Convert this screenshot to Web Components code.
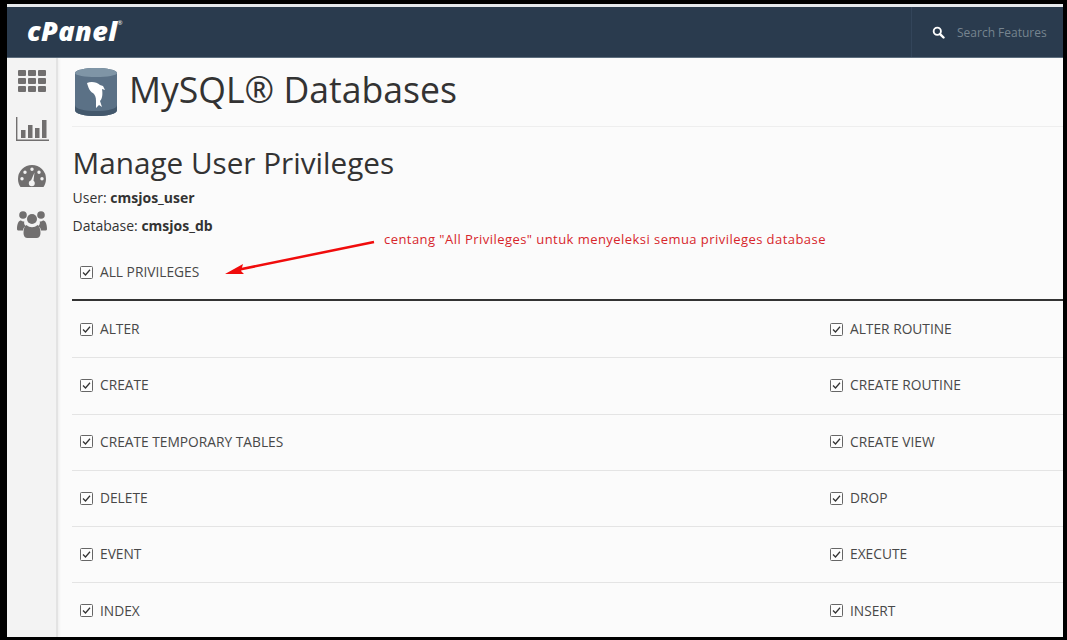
<!DOCTYPE html>
<html><head><meta charset="utf-8"><style>
html,body{margin:0;padding:0;background:#000}
body{font-family:"Open Sans",sans-serif}
</style></head><body>
<cp-app>
  <cp-header slot="header"></cp-header>
  <cp-sidebar slot="side"></cp-sidebar>
  <cp-title heading="MySQL® Databases"></cp-title>
  <cp-context user="cmsjos_user" db="cmsjos_db"></cp-context>
  <cp-privs></cp-privs>
</cp-app>
<script>
function def(name,html){customElements.define(name,class extends HTMLElement{
  connectedCallback(){if(this.shadowRoot)return;const r=this.attachShadow({mode:'open'});r.innerHTML=typeof html==='function'?html(this):html;}
});}
def('cp-app',`<style>
:host{display:block;width:1067px;height:640px;box-sizing:border-box;background:#000;padding:4px 4px 3px 7px;overflow:hidden}
.in{height:100%;display:flex;flex-direction:column;background:#fbfbfb;overflow:hidden;position:relative}
.hd{flex:none;border-top:3px solid #e6e9ec}
.body{flex:1;min-height:0;display:flex}
.main{flex:1;min-width:0;padding:0 0 0 14px;overflow:hidden}
</style><div class="in"><div class="hd"><slot name="header"></slot></div><div class="body"><slot name="side"></slot><div class="main"><slot></slot></div></div></div>`);
def('cp-header',`<style>
:host{display:flex;background:#2a3b4e;justify-content:space-between;border-bottom:1px solid #5d6e7e;box-sizing:border-box;height:51px}
.logo{margin:10px 0 0 20px;font:italic 800 27px "Open Sans",sans-serif;color:#fff;letter-spacing:.4px;line-height:28px;position:relative;height:28px}
.logo sup{font:400 6px "Open Sans",sans-serif;position:absolute;top:2px;right:-5px;letter-spacing:0}
.search{width:152px;box-sizing:border-box;border-left:1px solid #33455a;display:flex;align-items:center;padding-left:20px;gap:12px;color:#76848f;font-size:12px}
svg{display:block}
</style><div class="logo">cPanel<sup>®</sup></div>
<div class="search"><svg width="13" height="13" viewBox="0 0 14 14" fill="none" stroke="#fff"><circle cx="5.700" cy="5.700" r="3.900" stroke-width="2"/><path d="M8.700 8.700 12.400 12.400" stroke-width="2.600" stroke-linecap="round"/></svg><span>Search Features</span></div>`);
def('cp-sidebar',`<style>
:host{display:flex;flex:none;width:51px;box-sizing:border-box;background:#f3f3f3;border-right:2px solid #e3e3e3;box-shadow:1px 0 3px rgba(0,0,0,.06);flex-direction:column;align-items:center;padding-top:12px}
svg{display:block;fill:#716f6f;flex:none}
</style>
<svg width="30" height="24" viewBox="0 0 30 24"><g>
<rect x="1" y="0" width="8" height="6" rx="1"/><rect x="11" y="0" width="8" height="6" rx="1"/><rect x="21" y="0" width="8" height="6" rx="1"/>
<rect x="1" y="8" width="8" height="6" rx="1"/><rect x="11" y="8" width="8" height="6" rx="1"/><rect x="21" y="8" width="8" height="6" rx="1"/>
<rect x="1" y="16" width="8" height="6" rx="1"/><rect x="11" y="16" width="8" height="6" rx="1"/><rect x="21" y="16" width="8" height="6" rx="1"/></g></svg>
<svg width="34" height="26" viewBox="0 0 34 26" style="margin-top:23px"><path d="M1 0h1.400v22.600H34V24H1z"/><rect x="6" y="13" width="4.500" height="8"/><rect x="13" y="8" width="4.500" height="13"/><rect x="20" y="11" width="4.500" height="10"/><rect x="27" y="3" width="4.500" height="18"/></svg>
<svg width="30" height="24" viewBox="0 0 30 24" style="margin-top:21px"><path fill-rule="evenodd" d="M15 1A14 14 0 0 0 1 15c0 3 .9 5.600 2.500 8h23c1.600-2.400 2.500-5 2.500-8A14 14 0 0 0 15 1zM15 3.500a1.700 1.700 0 1 1 0 3.400 1.700 1.700 0 0 1 0-3.400zM8 6.500a1.700 1.700 0 1 1 0 3.400 1.700 1.700 0 0 1 0-3.400zM22 6.500a1.700 1.700 0 1 1 0 3.400 1.700 1.700 0 0 1 0-3.400zM5 13a1.700 1.700 0 1 1 0 3.400A1.700 1.700 0 0 1 5 13zM25 13a1.700 1.700 0 1 1 0 3.400 1.700 1.700 0 0 1 0-3.400zM17.500 8.500l-1 8.200c.8.600 1.300 1.500 1.300 2.500a3 3 0 0 1-6 0c0-1.400 1-2.600 2.300-2.900z"/></svg>
<svg width="32" height="30" viewBox="0 0 32 30" style="margin-top:22px"><circle cx="7" cy="5" r="3.800"/><circle cx="25" cy="5" r="3.800"/><circle cx="16" cy="9" r="5"/><path d="M1 19c0-6 2-8.500 4-8.500 1 .8 2 1.200 3.300 1-.6 1.800.2 3.400 1.200 4.500-1.500 1-2.300 2.500-2.500 4.500H3c-1.300 0-2-.4-2-1.500zM31 19c0-6-2-8.500-4-8.500-1 .8-2 1.200-3.300 1 .6 1.800-.2 3.400-1.200 4.500 1.500 1 2.300 2.500 2.500 4.500H29c1.300 0 2-.4 2-1.500zM10.500 15c1.600 1.500 3.500 2.200 5.500 2.200s3.900-.7 5.500-2.200c1.800 1 3 3.500 3 8 0 3-1.500 5-4 5h-9c-2.500 0-4-2-4-5 0-4.500 1.200-7 3-8z"/></svg>`);
def('cp-title',h=>`<style>
:host{display:flex;align-items:center;height:69px;box-sizing:border-box;border-bottom:1px solid #eee;gap:12px;padding-left:3px;padding-bottom:4px}
svg{display:block;flex:none;margin-top:4px}
h1{margin:0;font:400 35.600px/1 "Open Sans",sans-serif;color:#333}
</style><svg width="42" height="48" viewBox="0 0 42 48"><path fill="#5b7186" d="M0 5C0 2 10 0 21 0s21 2 21 5v37c0 4-10 6-21 6S0 46 0 42z"/><path fill="#7f95a6" d="M0 5C0 2 10 0 21 0s21 2 21 5c0 2.500-10 4-21 4S0 7.500 0 5z"/><path fill="#43586c" d="M0 37c0 4 10 6 21 6s21-2 21-6v5c0 4-10 6-21 6S0 46 0 42z"/><path fill="#fff" d="M12 15C16 13 22 14 25 17L28 18 30 22 27 21C28 27 27 31 25 33L27 39 24 37 21 40 21 33C21 29 20 27 18 25 15 24 13 19 12 15z"/></svg><h1>${h.getAttribute('heading')}</h1>`);
def('cp-context',h=>`<style>
:host{display:block;padding:15px 0 0 .5px;color:#333;font-size:14px}
h2{margin:0 0 1px;font:400 29.700px/41px "Open Sans",sans-serif;color:#333}
p{margin:0;line-height:28px;font-size:14px}
b{font-weight:700}
</style><h2>Manage User Privileges</h2><p>User: <b>${h.getAttribute('user')}</b></p><p>Database: <b>${h.getAttribute('db')}</b></p>`);
const PR=[['ALTER','ALTER ROUTINE'],['CREATE','CREATE ROUTINE'],['CREATE TEMPORARY TABLES','CREATE VIEW'],['DELETE','DROP'],['EVENT','EXECUTE'],['INDEX','INSERT']];
def('cp-check',`<style>
:host{display:inline-flex;align-items:center;gap:7px;color:#484848;font-size:13.750px;line-height:18px}
svg{display:block;flex:none}
</style><svg width="13" height="13" viewBox="0 0 13 13" fill="none"><rect x=".5" y=".5" width="12" height="12" rx="1" fill="#fdfdfd" stroke="#666"/><path d="M3 6.500 5.500 9 10 3.800" stroke="#333" stroke-width="1.300"/></svg><slot></slot>`);
def('cp-privs',()=>`<style>
:host{display:block;position:relative;margin-top:12px}
.all{height:49px;box-sizing:border-box;padding:0 0 7px 8px;display:flex;align-items:center;border-bottom:2px solid #333;margin-bottom:1px}
.row{display:grid;grid-template-columns:750px 1fr;height:56.300px;box-sizing:border-box;border-bottom:1px solid #e4e4e4;align-items:center}
.row>*{padding-left:8px}
.note{position:absolute;left:312px;top:-22px;color:#d7262b;font:400 13px/18px "Open Sans",sans-serif;letter-spacing:.45px;white-space:nowrap}
svg.arrow{position:absolute;left:139px;top:-19px}
</style>
<div class="all"><cp-check>ALL PRIVILEGES</cp-check></div>
${PR.map(r=>`<div class="row"><span><cp-check>${r[0]}</cp-check></span><span><cp-check>${r[1]}</cp-check></span></div>`).join('')}
<span class="note">centang "All Privileges" untuk menyeleksi semua privileges database</span>
<svg class="arrow" width="170" height="50" viewBox="0 0 170 50"><path d="M163 9 26 37" stroke="#f00c0c" stroke-width="2.500"/><path d="M14 41 32 31 30 38 33 41z" fill="#f00c0c"/></svg>`);
</script>
</body></html>
